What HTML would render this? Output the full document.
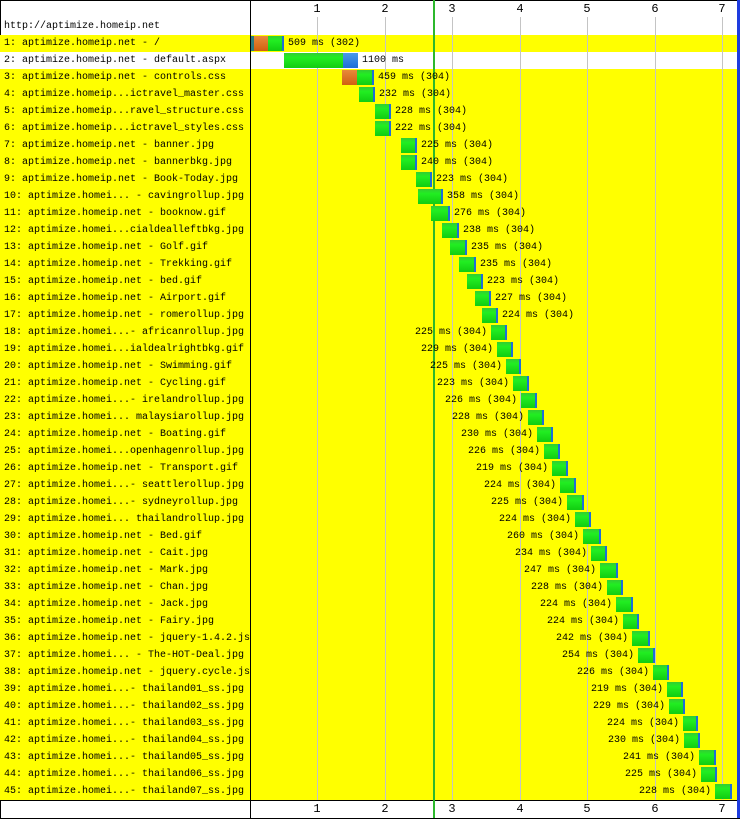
<!DOCTYPE html><html><head><style>
body{margin:0;width:740px;height:818px;position:relative;overflow:hidden;background:#fff;font-family:"Liberation Mono",monospace;font-size:10px;color:#000}
div{position:absolute}
.row{left:0;width:737px;height:17px;background:#ff0}
.lbl{left:4px;line-height:17px;white-space:pre}
.g{top:17px;width:1px;height:783px;background:#c4c4c4}
.n{top:2px;width:20px;margin-left:-10px;text-align:center;line-height:14px;font-size:12px}
.nb{top:802px;width:20px;margin-left:-10px;text-align:center;line-height:14px;font-size:12px}
.b{height:15px;background:linear-gradient(#3c3,#2e2 30%,#1c1);border-right:2px solid #1e6ed8;box-sizing:border-box}
.o{background:linear-gradient(#e88a3a,#d06010)}
.bl{background:linear-gradient(#4a9ae8,#1e6ed8)}
.t{line-height:17px;white-space:pre}
</style></head><body>
<div style="left:0;top:0;width:739px;height:817px;border:1px solid #000;border-right:none;box-sizing:content-box"></div>
<div style="left:737px;top:0;width:3px;height:818px;background:#1e3ce0"></div>
<div style="left:0;top:800px;width:737px;height:1px;background:#000"></div>
<div class="lbl" style="top:18px">http://aptimize.homeip.net</div>
<div id="rows"></div>
<script>
var L=["1: aptimize.homeip.net - /","2: aptimize.homeip.net - default.aspx","3: aptimize.homeip.net - controls.css","4: aptimize.homeip...ictravel_master.css","5: aptimize.homeip...ravel_structure.css","6: aptimize.homeip...ictravel_styles.css","7: aptimize.homeip.net - banner.jpg","8: aptimize.homeip.net - bannerbkg.jpg","9: aptimize.homeip.net - Book-Today.jpg","10: aptimize.homei... - cavingrollup.jpg","11: aptimize.homeip.net - booknow.gif","12: aptimize.homei...cialdealleftbkg.jpg","13: aptimize.homeip.net - Golf.gif","14: aptimize.homeip.net - Trekking.gif","15: aptimize.homeip.net - bed.gif","16: aptimize.homeip.net - Airport.gif","17: aptimize.homeip.net - romerollup.jpg","18: aptimize.homei...- africanrollup.jpg","19: aptimize.homei...ialdealrightbkg.gif","20: aptimize.homeip.net - Swimming.gif","21: aptimize.homeip.net - Cycling.gif","22: aptimize.homei...- irelandrollup.jpg","23: aptimize.homei... malaysiarollup.jpg","24: aptimize.homeip.net - Boating.gif","25: aptimize.homei...openhagenrollup.jpg","26: aptimize.homeip.net - Transport.gif","27: aptimize.homei...- seattlerollup.jpg","28: aptimize.homei...- sydneyrollup.jpg","29: aptimize.homei... thailandrollup.jpg","30: aptimize.homeip.net - Bed.gif","31: aptimize.homeip.net - Cait.jpg","32: aptimize.homeip.net - Mark.jpg","33: aptimize.homeip.net - Chan.jpg","34: aptimize.homeip.net - Jack.jpg","35: aptimize.homeip.net - Fairy.jpg","36: aptimize.homeip.net - jquery-1.4.2.js","37: aptimize.homei... - The-HOT-Deal.jpg","38: aptimize.homeip.net - jquery.cycle.js","39: aptimize.homei...- thailand01_ss.jpg","40: aptimize.homei...- thailand02_ss.jpg","41: aptimize.homei...- thailand03_ss.jpg","42: aptimize.homei...- thailand04_ss.jpg","43: aptimize.homei...- thailand05_ss.jpg","44: aptimize.homei...- thailand06_ss.jpg","45: aptimize.homei...- thailand07_ss.jpg"];
var B=[[250,284],[284,358],[342,374],[359,375],[375,391],[375,391],[401,417],[401,417],[416,432],[418,443],[431,450],[442,459],[450,467],[459,476],[467,483],[475,491],[482,498],[491,507],[497,513],[506,521],[513,529],[521,537],[528,544],[537,553],[544,560],[552,568],[560,576],[567,584],[575,591],[583,601],[591,607],[600,618],[607,623],[616,633],[623,639],[632,650],[638,655],[653,669],[667,683],[669,685],[683,698],[684,700],[699,716],[701,717],[715,732]];
var T=["509 ms (302)","1100 ms","459 ms (304)","232 ms (304)","228 ms (304)","222 ms (304)","225 ms (304)","240 ms (304)","223 ms (304)","358 ms (304)","276 ms (304)","238 ms (304)","235 ms (304)","235 ms (304)","223 ms (304)","227 ms (304)","224 ms (304)","225 ms (304)","229 ms (304)","225 ms (304)","223 ms (304)","226 ms (304)","228 ms (304)","230 ms (304)","226 ms (304)","219 ms (304)","224 ms (304)","225 ms (304)","224 ms (304)","260 ms (304)","234 ms (304)","247 ms (304)","228 ms (304)","224 ms (304)","224 ms (304)","242 ms (304)","254 ms (304)","226 ms (304)","219 ms (304)","229 ms (304)","224 ms (304)","230 ms (304)","241 ms (304)","225 ms (304)","228 ms (304)"];
var h="";
for(var i=0;i<45;i++){var y=35+i*17;h+='<div class="row" style="top:'+y+'px;'+(i==1?'background:#fff':'')+'"></div>';}
[317,385,452,520,587,655,722].forEach(function(x,k){h+='<div class="g" style="left:'+x+'px"></div><div class="n" style="left:'+x+'px">'+(k+1)+'</div><div class="nb" style="left:'+x+'px">'+(k+1)+'</div>';});
h+='<div style="left:433px;top:0;width:2px;height:818px;background:#2cb82c"></div>';
h+='<div style="left:250px;top:0;width:1px;height:818px;background:#000"></div>';
for(var i=0;i<45;i++){var y=35+i*17,a=B[i][0],e=B[i][1];
h+='<div class="lbl" style="top:'+y+'px">'+L[i]+'</div>';
if(i==0){h+='<div class="b" style="left:251px;top:'+(y+1)+'px;width:33px"></div><div class="o" style="position:absolute;left:251px;top:'+(y+1)+'px;width:3px;height:15px;background:#2a7a80"></div><div class="o" style="position:absolute;left:254px;top:'+(y+1)+'px;width:14px;height:15px"></div>';}
else if(i==1){h+='<div class="b" style="left:284px;top:'+(y+1)+'px;width:74px"></div><div class="bl" style="position:absolute;left:343px;top:'+(y+1)+'px;width:15px;height:15px"></div>';}
else if(i==2){h+='<div class="b" style="left:342px;top:'+(y+1)+'px;width:32px"></div><div class="o" style="position:absolute;left:342px;top:'+(y+1)+'px;width:15px;height:15px"></div>';}
else h+='<div class="b" style="left:'+a+'px;top:'+(y+1)+'px;width:'+(e-a)+'px"></div>';
if(i<17)h+='<div class="t" style="left:'+(e+4)+'px;top:'+y+'px">'+T[i]+'</div>';
else h+='<div class="t" style="left:'+(a-4-T[i].length*6)+'px;top:'+y+'px">'+T[i]+'</div>';}
document.getElementById("rows").outerHTML=h;
</script>
</body></html>
